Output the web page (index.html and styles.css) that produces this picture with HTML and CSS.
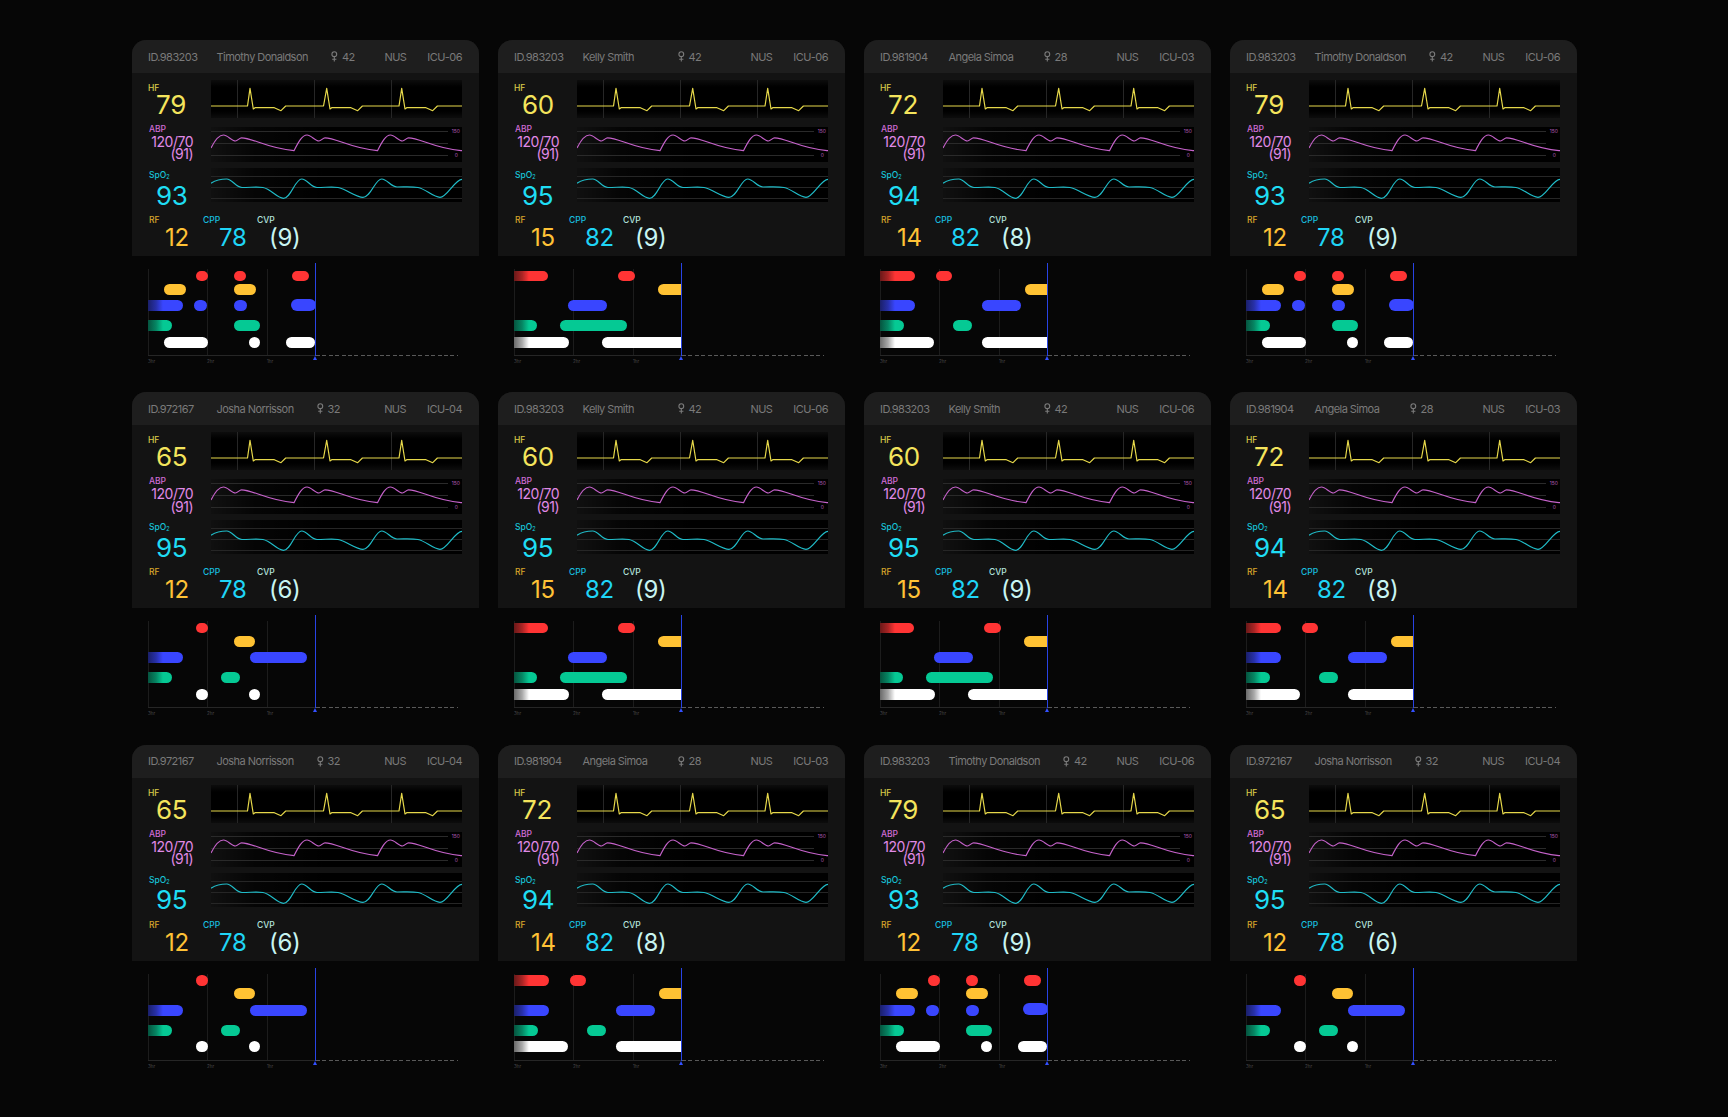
FILE: index.html
```html
<!DOCTYPE html>
<html lang="en">
<head>
<meta charset="utf-8">
<title>ICU Monitor Wall</title>
<link rel="stylesheet" href="styles.css">
</head>
<body>
<svg class="defs" width="0" height="0" aria-hidden="true">
  <defs>
    <g id="hfwave">
      <path d="M26.5 0V38M103.5 0V38M180.5 0V38" stroke="#262626" stroke-width="1" fill="none"/>
      <path d="M0 26H36.5L39 8.3L42.3 29L44 27.7H63.3L70 30.7L74.7 26H112.5L115.7 8.3L119 29L120.7 27.7H140L146.7 30.7L151.4 26H188L190.7 8.3L194 29L195.7 27.7H215L221.7 30.7L226.4 26H251" fill="none" stroke="#e6d84a" stroke-width="1.2" stroke-linejoin="round"/>
    </g>
    <g id="abpwave">
      <path d="M0 4.5H237M0 16.5H237M0 28.5H237" stroke="#2a2a2a" stroke-width="1" fill="none"/>
      <path d="M0 21C3 15 7.5 8 12.5 8C16.5 8 20.5 14 24.5 14C26.5 14 28.5 10.8 30.5 10.8C41.5 10.8 55.5 21 83 23.7C87 16 91 8 96 8C100 8 104 14 108 14C110 14 112 10.8 114 10.8C125 10.8 139 21 166.5 23.7C170.5 16 174.5 8 179.5 8C183.5 8 187.5 14 191.5 14C193.5 14 195.5 10.8 197.5 10.8C208.5 10.8 222.5 21 250 23.7L251 23.7" fill="none" stroke="#c562ca" stroke-width="1.2"/>
    </g>
    <g id="spowave">
      <path d="M0 8.5H251M0 19.5H251M0 30.5H251" stroke="#262626" stroke-width="1" fill="none"/>
      <path d="M0 15.3C5 12 10 11 15.7 11C21 11 25 19.5 31 19.5C40 19.5 46 18.5 52 19.5C60 21 66 30.3 72.5 30.3C80 30.3 84 11 90.7 11C96 11 100 19.5 106 19.5C115 19.5 121 18.5 127 19.5C135 21 145 29.3 152 29.3C160 29.3 164 11 170.7 11C176 11 180 19 186 19C195 19 201 18.5 207 19.5C215 21 222 29.3 229 29.3C236 29.3 244 11.3 251 11.3" fill="none" stroke="#20bcc8" stroke-width="1.2"/>
    </g>
    <g id="female">
      <circle cx="3.3" cy="3.2" r="2.4" fill="none" stroke="#7b7b7b" stroke-width="1.1"/>
      <path d="M3.3 5.6V10.5M1.2 8.3H5.4" stroke="#7b7b7b" stroke-width="1.1" fill="none"/>
    </g>
  </defs>
</svg>

<main class="wall">

<!-- Row 1 -->
<section class="monitor">
  <div class="card">
    <header class="card-head"><span class="pid">ID.983203</span><span class="pname">Timothy Donaldson</span><span class="psex"><svg class="fem" viewBox="0 0 7 11"><use href="#female"/></svg>42</span><span class="org">NUS</span><span class="bed">ICU-06</span></header>
    <div class="card-body">
      <div class="vrow hf"><div class="vital"><div class="vlabel">HF</div><div class="vnum">79</div></div><div class="chart chart-hf"><svg viewBox="0 0 251 38"><use href="#hfwave"/></svg></div></div>
      <div class="vrow abp"><div class="vital"><div class="vlabel">ABP</div><div class="bp">120/70<br>(91)</div></div><div class="chart chart-abp"><svg viewBox="0 0 251 35"><use href="#abpwave"/></svg><span class="scale hi">150</span><span class="scale lo">0</span></div></div>
      <div class="vrow spo"><div class="vital"><div class="vlabel">SpO<sub>2</sub></div><div class="vnum">93</div></div><div class="chart chart-spo"><svg viewBox="0 0 251 34"><use href="#spowave"/></svg></div></div>
      <div class="minor"><div class="mv rf"><div class="mlabel">RF</div><div class="mnum">12</div></div><div class="mv cpp"><div class="mlabel">CPP</div><div class="mnum">78</div></div><div class="mv cvp"><div class="mlabel">CVP</div><div class="mnum">(9)</div></div></div>
    </div>
  </div>
  <div class="timeline"><div class="tl-plot">
    <span class="tl-grid g0"></span><span class="tl-grid g1"></span><span class="tl-grid g2"></span>
    <div class="tl-bars">
      <span class="bar red" style="left:48px;width:12px"></span><span class="bar red" style="left:86px;width:12px"></span><span class="bar red" style="left:144px;width:17px"></span>
      <span class="bar yellow" style="left:16px;width:22px"></span><span class="bar yellow" style="left:86px;width:22px"></span>
      <span class="bar blue fade" style="left:0;width:35px"></span><span class="bar blue" style="left:46px;width:13px"></span><span class="bar blue" style="left:86px;width:13px"></span><span class="bar blue tall" style="left:143px;width:25px"></span>
      <span class="bar green fade" style="left:0;width:24px"></span><span class="bar green" style="left:86px;width:26px"></span>
      <span class="bar white" style="left:16px;width:44px"></span><span class="bar white" style="left:101px;width:11px"></span><span class="bar white" style="left:138px;width:29px"></span>
    </div>
    <span class="tl-axis"></span><span class="tl-future"></span><span class="tl-now"></span>
    <span class="tl-tick k0">3hr</span><span class="tl-tick k1">2hr</span><span class="tl-tick k2">1hr</span>
  </div></div>
</section>

<section class="monitor">
  <div class="card">
    <header class="card-head"><span class="pid">ID.983203</span><span class="pname">Kelly Smith</span><span class="psex"><svg class="fem" viewBox="0 0 7 11"><use href="#female"/></svg>42</span><span class="org">NUS</span><span class="bed">ICU-06</span></header>
    <div class="card-body">
      <div class="vrow hf"><div class="vital"><div class="vlabel">HF</div><div class="vnum">60</div></div><div class="chart chart-hf"><svg viewBox="0 0 251 38"><use href="#hfwave"/></svg></div></div>
      <div class="vrow abp"><div class="vital"><div class="vlabel">ABP</div><div class="bp">120/70<br>(91)</div></div><div class="chart chart-abp"><svg viewBox="0 0 251 35"><use href="#abpwave"/></svg><span class="scale hi">150</span><span class="scale lo">0</span></div></div>
      <div class="vrow spo"><div class="vital"><div class="vlabel">SpO<sub>2</sub></div><div class="vnum">95</div></div><div class="chart chart-spo"><svg viewBox="0 0 251 34"><use href="#spowave"/></svg></div></div>
      <div class="minor"><div class="mv rf"><div class="mlabel">RF</div><div class="mnum">15</div></div><div class="mv cpp"><div class="mlabel">CPP</div><div class="mnum">82</div></div><div class="mv cvp"><div class="mlabel">CVP</div><div class="mnum">(9)</div></div></div>
    </div>
  </div>
  <div class="timeline"><div class="tl-plot">
    <span class="tl-grid g0"></span><span class="tl-grid g1"></span><span class="tl-grid g2"></span>
    <div class="tl-bars">
      <span class="bar red fade" style="left:0;width:34px"></span><span class="bar red" style="left:104px;width:17px"></span>
      <span class="bar yellow" style="left:144px;width:30px"></span>
      <span class="bar blue" style="left:54px;width:39px"></span>
      <span class="bar green fade" style="left:0;width:23px"></span><span class="bar green" style="left:46px;width:67px"></span>
      <span class="bar white fade" style="left:0;width:55px"></span><span class="bar white" style="left:88px;width:90px"></span>
    </div>
    <span class="tl-axis"></span><span class="tl-future"></span><span class="tl-now"></span>
    <span class="tl-tick k0">3hr</span><span class="tl-tick k1">2hr</span><span class="tl-tick k2">1hr</span>
  </div></div>
</section>

<section class="monitor">
  <div class="card">
    <header class="card-head"><span class="pid">ID.981904</span><span class="pname">Angela Simoa</span><span class="psex"><svg class="fem" viewBox="0 0 7 11"><use href="#female"/></svg>28</span><span class="org">NUS</span><span class="bed">ICU-03</span></header>
    <div class="card-body">
      <div class="vrow hf"><div class="vital"><div class="vlabel">HF</div><div class="vnum">72</div></div><div class="chart chart-hf"><svg viewBox="0 0 251 38"><use href="#hfwave"/></svg></div></div>
      <div class="vrow abp"><div class="vital"><div class="vlabel">ABP</div><div class="bp">120/70<br>(91)</div></div><div class="chart chart-abp"><svg viewBox="0 0 251 35"><use href="#abpwave"/></svg><span class="scale hi">150</span><span class="scale lo">0</span></div></div>
      <div class="vrow spo"><div class="vital"><div class="vlabel">SpO<sub>2</sub></div><div class="vnum">94</div></div><div class="chart chart-spo"><svg viewBox="0 0 251 34"><use href="#spowave"/></svg></div></div>
      <div class="minor"><div class="mv rf"><div class="mlabel">RF</div><div class="mnum">14</div></div><div class="mv cpp"><div class="mlabel">CPP</div><div class="mnum">82</div></div><div class="mv cvp"><div class="mlabel">CVP</div><div class="mnum">(8)</div></div></div>
    </div>
  </div>
  <div class="timeline"><div class="tl-plot">
    <span class="tl-grid g0"></span><span class="tl-grid g1"></span><span class="tl-grid g2"></span>
    <div class="tl-bars">
      <span class="bar red fade" style="left:0;width:35px"></span><span class="bar red" style="left:56px;width:16px"></span>
      <span class="bar yellow" style="left:145px;width:30px"></span>
      <span class="bar blue fade" style="left:0;width:35px"></span><span class="bar blue" style="left:102px;width:39px"></span>
      <span class="bar green fade" style="left:0;width:24px"></span><span class="bar green" style="left:73px;width:19px"></span>
      <span class="bar white fade" style="left:0;width:54px"></span><span class="bar white" style="left:102px;width:80px"></span>
    </div>
    <span class="tl-axis"></span><span class="tl-future"></span><span class="tl-now"></span>
    <span class="tl-tick k0">3hr</span><span class="tl-tick k1">2hr</span><span class="tl-tick k2">1hr</span>
  </div></div>
</section>

<section class="monitor">
  <div class="card">
    <header class="card-head"><span class="pid">ID.983203</span><span class="pname">Timothy Donaldson</span><span class="psex"><svg class="fem" viewBox="0 0 7 11"><use href="#female"/></svg>42</span><span class="org">NUS</span><span class="bed">ICU-06</span></header>
    <div class="card-body">
      <div class="vrow hf"><div class="vital"><div class="vlabel">HF</div><div class="vnum">79</div></div><div class="chart chart-hf"><svg viewBox="0 0 251 38"><use href="#hfwave"/></svg></div></div>
      <div class="vrow abp"><div class="vital"><div class="vlabel">ABP</div><div class="bp">120/70<br>(91)</div></div><div class="chart chart-abp"><svg viewBox="0 0 251 35"><use href="#abpwave"/></svg><span class="scale hi">150</span><span class="scale lo">0</span></div></div>
      <div class="vrow spo"><div class="vital"><div class="vlabel">SpO<sub>2</sub></div><div class="vnum">93</div></div><div class="chart chart-spo"><svg viewBox="0 0 251 34"><use href="#spowave"/></svg></div></div>
      <div class="minor"><div class="mv rf"><div class="mlabel">RF</div><div class="mnum">12</div></div><div class="mv cpp"><div class="mlabel">CPP</div><div class="mnum">78</div></div><div class="mv cvp"><div class="mlabel">CVP</div><div class="mnum">(9)</div></div></div>
    </div>
  </div>
  <div class="timeline"><div class="tl-plot">
    <span class="tl-grid g0"></span><span class="tl-grid g1"></span><span class="tl-grid g2"></span>
    <div class="tl-bars">
      <span class="bar red" style="left:48px;width:12px"></span><span class="bar red" style="left:86px;width:12px"></span><span class="bar red" style="left:144px;width:17px"></span>
      <span class="bar yellow" style="left:16px;width:22px"></span><span class="bar yellow" style="left:86px;width:22px"></span>
      <span class="bar blue fade" style="left:0;width:35px"></span><span class="bar blue" style="left:46px;width:13px"></span><span class="bar blue" style="left:86px;width:13px"></span><span class="bar blue tall" style="left:143px;width:25px"></span>
      <span class="bar green fade" style="left:0;width:24px"></span><span class="bar green" style="left:86px;width:26px"></span>
      <span class="bar white" style="left:16px;width:44px"></span><span class="bar white" style="left:101px;width:11px"></span><span class="bar white" style="left:138px;width:29px"></span>
    </div>
    <span class="tl-axis"></span><span class="tl-future"></span><span class="tl-now"></span>
    <span class="tl-tick k0">3hr</span><span class="tl-tick k1">2hr</span><span class="tl-tick k2">1hr</span>
  </div></div>
</section>

<!-- Row 2 -->
<section class="monitor">
  <div class="card">
    <header class="card-head"><span class="pid">ID.972167</span><span class="pname">Josha Norrisson</span><span class="psex"><svg class="fem" viewBox="0 0 7 11"><use href="#female"/></svg>32</span><span class="org">NUS</span><span class="bed">ICU-04</span></header>
    <div class="card-body">
      <div class="vrow hf"><div class="vital"><div class="vlabel">HF</div><div class="vnum">65</div></div><div class="chart chart-hf"><svg viewBox="0 0 251 38"><use href="#hfwave"/></svg></div></div>
      <div class="vrow abp"><div class="vital"><div class="vlabel">ABP</div><div class="bp">120/70<br>(91)</div></div><div class="chart chart-abp"><svg viewBox="0 0 251 35"><use href="#abpwave"/></svg><span class="scale hi">150</span><span class="scale lo">0</span></div></div>
      <div class="vrow spo"><div class="vital"><div class="vlabel">SpO<sub>2</sub></div><div class="vnum">95</div></div><div class="chart chart-spo"><svg viewBox="0 0 251 34"><use href="#spowave"/></svg></div></div>
      <div class="minor"><div class="mv rf"><div class="mlabel">RF</div><div class="mnum">12</div></div><div class="mv cpp"><div class="mlabel">CPP</div><div class="mnum">78</div></div><div class="mv cvp"><div class="mlabel">CVP</div><div class="mnum">(6)</div></div></div>
    </div>
  </div>
  <div class="timeline"><div class="tl-plot">
    <span class="tl-grid g0"></span><span class="tl-grid g1"></span><span class="tl-grid g2"></span>
    <div class="tl-bars">
      <span class="bar red" style="left:48px;width:12px"></span>
      <span class="bar yellow" style="left:86px;width:21px"></span>
      <span class="bar blue fade" style="left:0;width:35px"></span><span class="bar blue" style="left:102px;width:57px"></span>
      <span class="bar green fade" style="left:0;width:24px"></span><span class="bar green" style="left:73px;width:19px"></span>
      <span class="bar white" style="left:48px;width:12px"></span><span class="bar white" style="left:101px;width:11px"></span>
    </div>
    <span class="tl-axis"></span><span class="tl-future"></span><span class="tl-now"></span>
    <span class="tl-tick k0">3hr</span><span class="tl-tick k1">2hr</span><span class="tl-tick k2">1hr</span>
  </div></div>
</section>

<section class="monitor">
  <div class="card">
    <header class="card-head"><span class="pid">ID.983203</span><span class="pname">Kelly Smith</span><span class="psex"><svg class="fem" viewBox="0 0 7 11"><use href="#female"/></svg>42</span><span class="org">NUS</span><span class="bed">ICU-06</span></header>
    <div class="card-body">
      <div class="vrow hf"><div class="vital"><div class="vlabel">HF</div><div class="vnum">60</div></div><div class="chart chart-hf"><svg viewBox="0 0 251 38"><use href="#hfwave"/></svg></div></div>
      <div class="vrow abp"><div class="vital"><div class="vlabel">ABP</div><div class="bp">120/70<br>(91)</div></div><div class="chart chart-abp"><svg viewBox="0 0 251 35"><use href="#abpwave"/></svg><span class="scale hi">150</span><span class="scale lo">0</span></div></div>
      <div class="vrow spo"><div class="vital"><div class="vlabel">SpO<sub>2</sub></div><div class="vnum">95</div></div><div class="chart chart-spo"><svg viewBox="0 0 251 34"><use href="#spowave"/></svg></div></div>
      <div class="minor"><div class="mv rf"><div class="mlabel">RF</div><div class="mnum">15</div></div><div class="mv cpp"><div class="mlabel">CPP</div><div class="mnum">82</div></div><div class="mv cvp"><div class="mlabel">CVP</div><div class="mnum">(9)</div></div></div>
    </div>
  </div>
  <div class="timeline"><div class="tl-plot">
    <span class="tl-grid g0"></span><span class="tl-grid g1"></span><span class="tl-grid g2"></span>
    <div class="tl-bars">
      <span class="bar red fade" style="left:0;width:34px"></span><span class="bar red" style="left:104px;width:17px"></span>
      <span class="bar yellow" style="left:144px;width:30px"></span>
      <span class="bar blue" style="left:54px;width:39px"></span>
      <span class="bar green fade" style="left:0;width:23px"></span><span class="bar green" style="left:46px;width:67px"></span>
      <span class="bar white fade" style="left:0;width:55px"></span><span class="bar white" style="left:88px;width:90px"></span>
    </div>
    <span class="tl-axis"></span><span class="tl-future"></span><span class="tl-now"></span>
    <span class="tl-tick k0">3hr</span><span class="tl-tick k1">2hr</span><span class="tl-tick k2">1hr</span>
  </div></div>
</section>

<section class="monitor">
  <div class="card">
    <header class="card-head"><span class="pid">ID.983203</span><span class="pname">Kelly Smith</span><span class="psex"><svg class="fem" viewBox="0 0 7 11"><use href="#female"/></svg>42</span><span class="org">NUS</span><span class="bed">ICU-06</span></header>
    <div class="card-body">
      <div class="vrow hf"><div class="vital"><div class="vlabel">HF</div><div class="vnum">60</div></div><div class="chart chart-hf"><svg viewBox="0 0 251 38"><use href="#hfwave"/></svg></div></div>
      <div class="vrow abp"><div class="vital"><div class="vlabel">ABP</div><div class="bp">120/70<br>(91)</div></div><div class="chart chart-abp"><svg viewBox="0 0 251 35"><use href="#abpwave"/></svg><span class="scale hi">150</span><span class="scale lo">0</span></div></div>
      <div class="vrow spo"><div class="vital"><div class="vlabel">SpO<sub>2</sub></div><div class="vnum">95</div></div><div class="chart chart-spo"><svg viewBox="0 0 251 34"><use href="#spowave"/></svg></div></div>
      <div class="minor"><div class="mv rf"><div class="mlabel">RF</div><div class="mnum">15</div></div><div class="mv cpp"><div class="mlabel">CPP</div><div class="mnum">82</div></div><div class="mv cvp"><div class="mlabel">CVP</div><div class="mnum">(9)</div></div></div>
    </div>
  </div>
  <div class="timeline"><div class="tl-plot">
    <span class="tl-grid g0"></span><span class="tl-grid g1"></span><span class="tl-grid g2"></span>
    <div class="tl-bars">
      <span class="bar red fade" style="left:0;width:34px"></span><span class="bar red" style="left:104px;width:17px"></span>
      <span class="bar yellow" style="left:144px;width:30px"></span>
      <span class="bar blue" style="left:54px;width:39px"></span>
      <span class="bar green fade" style="left:0;width:23px"></span><span class="bar green" style="left:46px;width:67px"></span>
      <span class="bar white fade" style="left:0;width:55px"></span><span class="bar white" style="left:88px;width:90px"></span>
    </div>
    <span class="tl-axis"></span><span class="tl-future"></span><span class="tl-now"></span>
    <span class="tl-tick k0">3hr</span><span class="tl-tick k1">2hr</span><span class="tl-tick k2">1hr</span>
  </div></div>
</section>

<section class="monitor">
  <div class="card">
    <header class="card-head"><span class="pid">ID.981904</span><span class="pname">Angela Simoa</span><span class="psex"><svg class="fem" viewBox="0 0 7 11"><use href="#female"/></svg>28</span><span class="org">NUS</span><span class="bed">ICU-03</span></header>
    <div class="card-body">
      <div class="vrow hf"><div class="vital"><div class="vlabel">HF</div><div class="vnum">72</div></div><div class="chart chart-hf"><svg viewBox="0 0 251 38"><use href="#hfwave"/></svg></div></div>
      <div class="vrow abp"><div class="vital"><div class="vlabel">ABP</div><div class="bp">120/70<br>(91)</div></div><div class="chart chart-abp"><svg viewBox="0 0 251 35"><use href="#abpwave"/></svg><span class="scale hi">150</span><span class="scale lo">0</span></div></div>
      <div class="vrow spo"><div class="vital"><div class="vlabel">SpO<sub>2</sub></div><div class="vnum">94</div></div><div class="chart chart-spo"><svg viewBox="0 0 251 34"><use href="#spowave"/></svg></div></div>
      <div class="minor"><div class="mv rf"><div class="mlabel">RF</div><div class="mnum">14</div></div><div class="mv cpp"><div class="mlabel">CPP</div><div class="mnum">82</div></div><div class="mv cvp"><div class="mlabel">CVP</div><div class="mnum">(8)</div></div></div>
    </div>
  </div>
  <div class="timeline"><div class="tl-plot">
    <span class="tl-grid g0"></span><span class="tl-grid g1"></span><span class="tl-grid g2"></span>
    <div class="tl-bars">
      <span class="bar red fade" style="left:0;width:35px"></span><span class="bar red" style="left:56px;width:16px"></span>
      <span class="bar yellow" style="left:145px;width:30px"></span>
      <span class="bar blue fade" style="left:0;width:35px"></span><span class="bar blue" style="left:102px;width:39px"></span>
      <span class="bar green fade" style="left:0;width:24px"></span><span class="bar green" style="left:73px;width:19px"></span>
      <span class="bar white fade" style="left:0;width:54px"></span><span class="bar white" style="left:102px;width:80px"></span>
    </div>
    <span class="tl-axis"></span><span class="tl-future"></span><span class="tl-now"></span>
    <span class="tl-tick k0">3hr</span><span class="tl-tick k1">2hr</span><span class="tl-tick k2">1hr</span>
  </div></div>
</section>

<!-- Row 3 -->
<section class="monitor">
  <div class="card">
    <header class="card-head"><span class="pid">ID.972167</span><span class="pname">Josha Norrisson</span><span class="psex"><svg class="fem" viewBox="0 0 7 11"><use href="#female"/></svg>32</span><span class="org">NUS</span><span class="bed">ICU-04</span></header>
    <div class="card-body">
      <div class="vrow hf"><div class="vital"><div class="vlabel">HF</div><div class="vnum">65</div></div><div class="chart chart-hf"><svg viewBox="0 0 251 38"><use href="#hfwave"/></svg></div></div>
      <div class="vrow abp"><div class="vital"><div class="vlabel">ABP</div><div class="bp">120/70<br>(91)</div></div><div class="chart chart-abp"><svg viewBox="0 0 251 35"><use href="#abpwave"/></svg><span class="scale hi">150</span><span class="scale lo">0</span></div></div>
      <div class="vrow spo"><div class="vital"><div class="vlabel">SpO<sub>2</sub></div><div class="vnum">95</div></div><div class="chart chart-spo"><svg viewBox="0 0 251 34"><use href="#spowave"/></svg></div></div>
      <div class="minor"><div class="mv rf"><div class="mlabel">RF</div><div class="mnum">12</div></div><div class="mv cpp"><div class="mlabel">CPP</div><div class="mnum">78</div></div><div class="mv cvp"><div class="mlabel">CVP</div><div class="mnum">(6)</div></div></div>
    </div>
  </div>
  <div class="timeline"><div class="tl-plot">
    <span class="tl-grid g0"></span><span class="tl-grid g1"></span><span class="tl-grid g2"></span>
    <div class="tl-bars">
      <span class="bar red" style="left:48px;width:12px"></span>
      <span class="bar yellow" style="left:86px;width:21px"></span>
      <span class="bar blue fade" style="left:0;width:35px"></span><span class="bar blue" style="left:102px;width:57px"></span>
      <span class="bar green fade" style="left:0;width:24px"></span><span class="bar green" style="left:73px;width:19px"></span>
      <span class="bar white" style="left:48px;width:12px"></span><span class="bar white" style="left:101px;width:11px"></span>
    </div>
    <span class="tl-axis"></span><span class="tl-future"></span><span class="tl-now"></span>
    <span class="tl-tick k0">3hr</span><span class="tl-tick k1">2hr</span><span class="tl-tick k2">1hr</span>
  </div></div>
</section>

<section class="monitor">
  <div class="card">
    <header class="card-head"><span class="pid">ID.981904</span><span class="pname">Angela Simoa</span><span class="psex"><svg class="fem" viewBox="0 0 7 11"><use href="#female"/></svg>28</span><span class="org">NUS</span><span class="bed">ICU-03</span></header>
    <div class="card-body">
      <div class="vrow hf"><div class="vital"><div class="vlabel">HF</div><div class="vnum">72</div></div><div class="chart chart-hf"><svg viewBox="0 0 251 38"><use href="#hfwave"/></svg></div></div>
      <div class="vrow abp"><div class="vital"><div class="vlabel">ABP</div><div class="bp">120/70<br>(91)</div></div><div class="chart chart-abp"><svg viewBox="0 0 251 35"><use href="#abpwave"/></svg><span class="scale hi">150</span><span class="scale lo">0</span></div></div>
      <div class="vrow spo"><div class="vital"><div class="vlabel">SpO<sub>2</sub></div><div class="vnum">94</div></div><div class="chart chart-spo"><svg viewBox="0 0 251 34"><use href="#spowave"/></svg></div></div>
      <div class="minor"><div class="mv rf"><div class="mlabel">RF</div><div class="mnum">14</div></div><div class="mv cpp"><div class="mlabel">CPP</div><div class="mnum">82</div></div><div class="mv cvp"><div class="mlabel">CVP</div><div class="mnum">(8)</div></div></div>
    </div>
  </div>
  <div class="timeline"><div class="tl-plot">
    <span class="tl-grid g0"></span><span class="tl-grid g1"></span><span class="tl-grid g2"></span>
    <div class="tl-bars">
      <span class="bar red fade" style="left:0;width:35px"></span><span class="bar red" style="left:56px;width:16px"></span>
      <span class="bar yellow" style="left:145px;width:30px"></span>
      <span class="bar blue fade" style="left:0;width:35px"></span><span class="bar blue" style="left:102px;width:39px"></span>
      <span class="bar green fade" style="left:0;width:24px"></span><span class="bar green" style="left:73px;width:19px"></span>
      <span class="bar white fade" style="left:0;width:54px"></span><span class="bar white" style="left:102px;width:80px"></span>
    </div>
    <span class="tl-axis"></span><span class="tl-future"></span><span class="tl-now"></span>
    <span class="tl-tick k0">3hr</span><span class="tl-tick k1">2hr</span><span class="tl-tick k2">1hr</span>
  </div></div>
</section>

<section class="monitor">
  <div class="card">
    <header class="card-head"><span class="pid">ID.983203</span><span class="pname">Timothy Donaldson</span><span class="psex"><svg class="fem" viewBox="0 0 7 11"><use href="#female"/></svg>42</span><span class="org">NUS</span><span class="bed">ICU-06</span></header>
    <div class="card-body">
      <div class="vrow hf"><div class="vital"><div class="vlabel">HF</div><div class="vnum">79</div></div><div class="chart chart-hf"><svg viewBox="0 0 251 38"><use href="#hfwave"/></svg></div></div>
      <div class="vrow abp"><div class="vital"><div class="vlabel">ABP</div><div class="bp">120/70<br>(91)</div></div><div class="chart chart-abp"><svg viewBox="0 0 251 35"><use href="#abpwave"/></svg><span class="scale hi">150</span><span class="scale lo">0</span></div></div>
      <div class="vrow spo"><div class="vital"><div class="vlabel">SpO<sub>2</sub></div><div class="vnum">93</div></div><div class="chart chart-spo"><svg viewBox="0 0 251 34"><use href="#spowave"/></svg></div></div>
      <div class="minor"><div class="mv rf"><div class="mlabel">RF</div><div class="mnum">12</div></div><div class="mv cpp"><div class="mlabel">CPP</div><div class="mnum">78</div></div><div class="mv cvp"><div class="mlabel">CVP</div><div class="mnum">(9)</div></div></div>
    </div>
  </div>
  <div class="timeline"><div class="tl-plot">
    <span class="tl-grid g0"></span><span class="tl-grid g1"></span><span class="tl-grid g2"></span>
    <div class="tl-bars">
      <span class="bar red" style="left:48px;width:12px"></span><span class="bar red" style="left:86px;width:12px"></span><span class="bar red" style="left:144px;width:17px"></span>
      <span class="bar yellow" style="left:16px;width:22px"></span><span class="bar yellow" style="left:86px;width:22px"></span>
      <span class="bar blue fade" style="left:0;width:35px"></span><span class="bar blue" style="left:46px;width:13px"></span><span class="bar blue" style="left:86px;width:13px"></span><span class="bar blue tall" style="left:143px;width:25px"></span>
      <span class="bar green fade" style="left:0;width:24px"></span><span class="bar green" style="left:86px;width:26px"></span>
      <span class="bar white" style="left:16px;width:44px"></span><span class="bar white" style="left:101px;width:11px"></span><span class="bar white" style="left:138px;width:29px"></span>
    </div>
    <span class="tl-axis"></span><span class="tl-future"></span><span class="tl-now"></span>
    <span class="tl-tick k0">3hr</span><span class="tl-tick k1">2hr</span><span class="tl-tick k2">1hr</span>
  </div></div>
</section>

<section class="monitor">
  <div class="card">
    <header class="card-head"><span class="pid">ID.972167</span><span class="pname">Josha Norrisson</span><span class="psex"><svg class="fem" viewBox="0 0 7 11"><use href="#female"/></svg>32</span><span class="org">NUS</span><span class="bed">ICU-04</span></header>
    <div class="card-body">
      <div class="vrow hf"><div class="vital"><div class="vlabel">HF</div><div class="vnum">65</div></div><div class="chart chart-hf"><svg viewBox="0 0 251 38"><use href="#hfwave"/></svg></div></div>
      <div class="vrow abp"><div class="vital"><div class="vlabel">ABP</div><div class="bp">120/70<br>(91)</div></div><div class="chart chart-abp"><svg viewBox="0 0 251 35"><use href="#abpwave"/></svg><span class="scale hi">150</span><span class="scale lo">0</span></div></div>
      <div class="vrow spo"><div class="vital"><div class="vlabel">SpO<sub>2</sub></div><div class="vnum">95</div></div><div class="chart chart-spo"><svg viewBox="0 0 251 34"><use href="#spowave"/></svg></div></div>
      <div class="minor"><div class="mv rf"><div class="mlabel">RF</div><div class="mnum">12</div></div><div class="mv cpp"><div class="mlabel">CPP</div><div class="mnum">78</div></div><div class="mv cvp"><div class="mlabel">CVP</div><div class="mnum">(6)</div></div></div>
    </div>
  </div>
  <div class="timeline"><div class="tl-plot">
    <span class="tl-grid g0"></span><span class="tl-grid g1"></span><span class="tl-grid g2"></span>
    <div class="tl-bars">
      <span class="bar red" style="left:48px;width:12px"></span>
      <span class="bar yellow" style="left:86px;width:21px"></span>
      <span class="bar blue fade" style="left:0;width:35px"></span><span class="bar blue" style="left:102px;width:57px"></span>
      <span class="bar green fade" style="left:0;width:24px"></span><span class="bar green" style="left:73px;width:19px"></span>
      <span class="bar white" style="left:48px;width:12px"></span><span class="bar white" style="left:101px;width:11px"></span>
    </div>
    <span class="tl-axis"></span><span class="tl-future"></span><span class="tl-now"></span>
    <span class="tl-tick k0">3hr</span><span class="tl-tick k1">2hr</span><span class="tl-tick k2">1hr</span>
  </div></div>
</section>

</main>
</body>
</html>
```

FILE: styles.css
```css
* { box-sizing: border-box; }

html, body {
  margin: 0;
  background: #060606;
}

body {
  width: 1728px;
  height: 1117px;
  overflow: hidden;
  font-family: Inter, "Liberation Sans", sans-serif;
  color: #7b7b7b;
}

.defs {
  position: absolute;
  width: 0;
  height: 0;
  overflow: hidden;
}

.wall {
  display: grid;
  grid-template-columns: repeat(4, 347px);
  grid-auto-rows: 352.3px;
  column-gap: 19px;
  padding: 40px 0 0 132px;
}

/* ---------- card ---------- */
.card {
  height: 216px;
  background: #131313;
  border-radius: 14px 14px 0 0;
  overflow: hidden;
}

.card-head {
  height: 33px;
  background: #1e1e1e;
  display: flex;
  align-items: center;
  padding: 0 17px 0 16px;
  font-size: 11px;
  letter-spacing: -0.55px;
  color: #7a7a7a;
  white-space: nowrap;
}

.pid { width: 68.5px; flex: none; }
.pname { min-width: 72px; flex: none; }
.psex {
  margin-left: 23px;
  display: flex;
  align-items: center;
  gap: 4px;
}
.fem { width: 7px; height: 11px; display: block; }
.org { margin-left: auto; }
.bed { margin-left: 21px; }

.card-body {
  padding-top: 7px;
}

.vrow {
  display: flex;
}
.vrow.hf { height: 38px; }
.vrow.abp { height: 35px; margin-top: 9px; }
.vrow.spo { height: 34px; margin-top: 6px; }

.vital {
  width: 79px;
  flex: none;
}

.vlabel {
  font-size: 8.5px;
  line-height: 8px;
  padding-left: 16px;
  font-weight: 500;
}
.vlabel sub {
  font-size: 5.5px;
  vertical-align: baseline;
  position: relative;
  top: 1px;
}

.vnum {
  font-size: 26px;
  line-height: 26px;
  padding-left: 24px;
  letter-spacing: -0.3px;
}

.hf .vital { padding-top: 4px; color: #d9cb49; }
.hf .vnum { color: #f4e45c; }

.abp .vital { margin-top: -2px; color: #d06cd6; }
.abp .vlabel { padding-left: 17px; }
.bp {
  font-size: 14px;
  line-height: 12.2px;
  margin-top: 3px;
  text-align: right;
  padding-right: 18px;
  letter-spacing: -0.5px;
  color: #e08ae7;
}

.spo .vital { padding-top: 3px; color: #17c3d8; }
.spo .vlabel { padding-left: 17px; }
.spo .vnum { margin-top: 2.5px; color: #1fddf4; }

.chart {
  position: relative;
  width: 251px;
  flex: none;
}
.chart svg {
  display: block;
  width: 251px;
  height: 100%;
  overflow: hidden;
}
.chart-hf {
  background: linear-gradient(180deg, rgba(0,0,0,0.35) 0, #000 18%, #000 82%, rgba(0,0,0,0.35) 100%);
}
.chart-abp,
.chart-spo {
  background: linear-gradient(90deg, rgba(0,0,0,0.15) 0, rgba(0,0,0,0.75) 18%, #000 45%, #000 100%);
}

.scale {
  position: absolute;
  font-size: 5px;
  line-height: 5px;
  color: #b25cb8;
}
.scale.hi { right: 2px; top: 2px; }
.scale.lo { right: 4px; top: 26px; }

/* minor vitals */
.minor {
  display: flex;
  padding: 14px 0 0 17px;
}
.mv { width: 54px; flex: none; }
.mlabel {
  font-size: 8.5px;
  line-height: 9px;
  font-weight: 500;
}
.mnum {
  font-size: 24px;
  line-height: 24px;
  padding-left: 16px;
  margin-top: 1px;
  letter-spacing: -0.3px;
}
.rf { color: #d7a52a; }
.rf .mnum { color: #ffc236; }
.cpp { color: #18c0e0; }
.cpp .mnum { color: #1fd5f6; }
.cvp { color: #b5e3df; }
.cvp .mnum { color: #c8f5f2; padding-left: 12px; }

/* ---------- timeline ---------- */
.timeline {
  height: 136px;
  padding-top: 1px;
}

.tl-plot {
  position: relative;
  margin-left: 16px;
  width: 310px;
  height: 99px;
}

.tl-grid {
  position: absolute;
  top: 12px;
  bottom: 0;
  width: 1px;
  background: #1c1c1c;
}
.g0 { left: 0; }
.g1 { left: 59px; }
.g2 { left: 119px; }

.tl-bars {
  position: absolute;
  left: 0;
  top: 0;
  width: 167px;
  height: 98px;
  overflow: hidden;
}

.bar {
  position: absolute;
  height: 11px;
  border-radius: 6px;
  background: var(--c);
}
.bar.red { --c: #ff3434; top: 13.5px; height: 10.5px; }
.bar.yellow { --c: #ffc233; top: 26.5px; }
.bar.blue { --c: #3946ff; top: 43px; }
.bar.blue.tall { top: 41.5px; height: 12px; }
.bar.green { --c: #05c994; top: 63px; }
.bar.white { --c: #ffffff; top: 79.5px; }
.bar.fade {
  border-radius: 0 6px 6px 0;
  background: linear-gradient(90deg, rgba(6,6,6,0.6) 0, rgba(6,6,6,0.35) 8px, rgba(6,6,6,0) 15px), var(--c);
}

.tl-axis {
  position: absolute;
  left: 0;
  bottom: 0;
  width: 168px;
  height: 1px;
  background: #262626;
}
.tl-future {
  position: absolute;
  left: 168px;
  right: 0;
  bottom: 0;
  height: 1px;
  background: repeating-linear-gradient(90deg, #595959 0 4px, transparent 4px 6.4px);
}
.tl-now {
  position: absolute;
  left: 167px;
  top: 6px;
  bottom: 0;
  width: 1.4px;
  background: #2843e4;
}
.tl-now::after {
  content: "";
  position: absolute;
  left: -2px;
  bottom: -4px;
  border-left: 2.7px solid transparent;
  border-right: 2.7px solid transparent;
  border-bottom: 4px solid #3350ff;
}

.tl-tick {
  position: absolute;
  top: 102px;
  font-size: 4.5px;
  line-height: 5px;
  color: #4a4a4a;
}
.k0 { left: 0; }
.k1 { left: 59px; }
.k2 { left: 119px; }
```
